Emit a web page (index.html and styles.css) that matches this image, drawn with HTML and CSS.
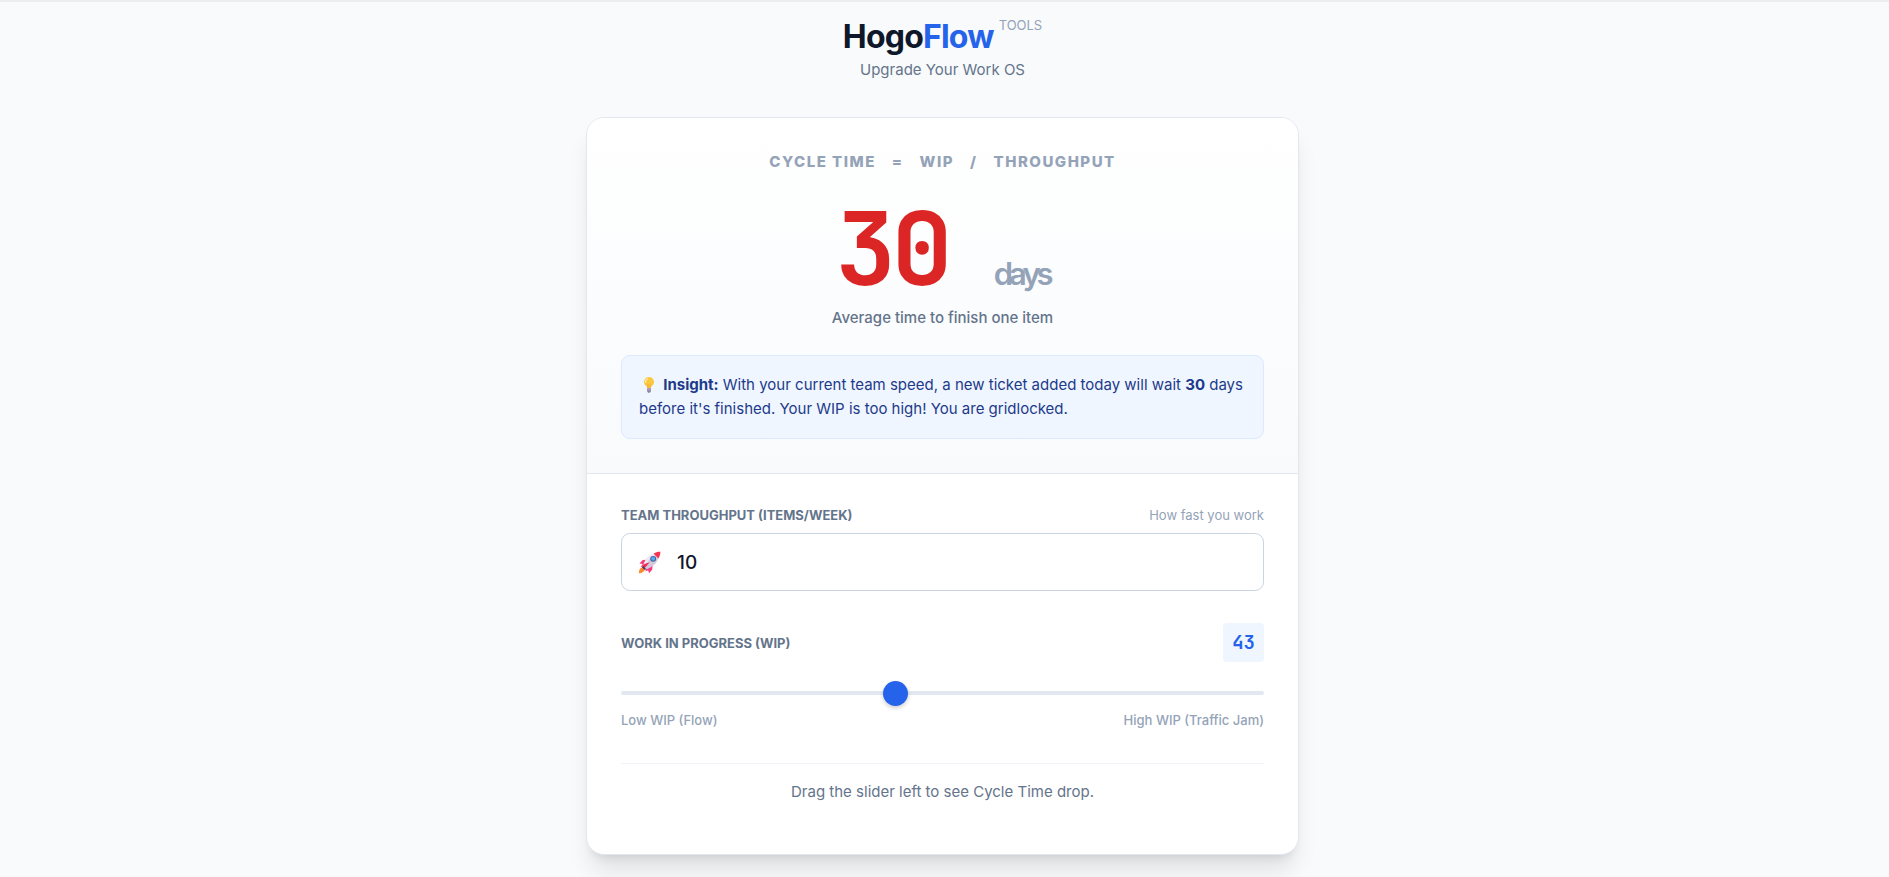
FILE: index.html
```
<!DOCTYPE html>
<html lang="en">
<head>
    <meta charset="UTF-8">
    <meta name="viewport" content="width=device-width, initial-scale=1.0">
    <title>HogoFlow Tools</title>
    <link rel="stylesheet" href="styles.css">
</head>
<body>
    <header class="header">
        <h1 class="logo">Hogo<span>Flow</span><sup>TOOLS</sup></h1>
        <p class="tagline">Upgrade Your Work OS</p>
    </header>

    <main class="card">
        <section class="result">
            <div class="formula">
                <span>Cycle Time</span><span>=</span><span>WIP</span><span>/</span><span>Throughput</span>
            </div>
            <div class="big-number">
                <span id="cycleTime">30</span>
                <span class="unit">days</span>
            </div>
            <p class="caption">Average time to finish one item</p>
            <div class="insight">
                <svg class="bulb" viewBox="0 0 20 20" aria-hidden="true">
                    <path d="M10 1a5.500 5.500 0 0 0-3.300 9.900c.9.7 1.100 1.500 1.300 2.600h4c.2-1.100.4-1.900 1.300-2.600A5.500 5.500 0 0 0 10 1z" fill="#fcc63f"/>
                    <path d="M8.500 3a4 4 0 0 0-2.300 4" stroke="#fff0a8" stroke-width="1.400" fill="none" stroke-linecap="round"/>
                    <path d="M8.800 13V9.500M11.200 13V9.500" stroke="#f29a2e" stroke-width=".8"/>
                    <path d="M7.800 13.500h4.400v3.200L11 18.500H9l-1.200-1.800z" fill="#8d83a3"/>
                    <path d="M8 15.300h4" stroke="#c9c2d8" stroke-width=".8"/>
                </svg>
                <strong>Insight:</strong> With your current team speed, a new ticket added today will wait <strong id="waitDays">30</strong> days before it's finished. <span id="verdict">Your WIP is too high! You are gridlocked.</span>
            </div>
        </section>

        <form class="controls">
            <div class="row">
                <label for="throughput">Team Throughput (items/week)</label>
                <span class="hint">How fast you work</span>
            </div>
            <div class="input-box">
                <svg class="rocket" viewBox="0 0 24 24" aria-hidden="true">
                    <path d="M1 23.200c-.3-3.400 1.300-5.700 4.400-6.400l2 2c-.8 2.800-3 4.300-6.400 4.400z" fill="#fb8b24"/>
                    <path d="M9.500 9 5 9.500 1.500 13l3.500.6-2.400 3.400 5.400-2.200zM15.300 15l-.6 4.500-3.200 3.800-.9-3.300-2.800 1.200 1.500-5.400z" fill="#f8377f"/>
                    <path d="M16.800 2.700C11.500 4.300 7.200 9 5.100 14.900l4.100 4.100c5.900-2.100 10.600-6.500 12.200-11.700z" fill="#d3c8de"/>
                    <path d="M16.800 2.700C12.300 4.200 8.500 7.900 6.300 12.500l2 2C10.800 9.500 14 6.100 18.300 4.200z" fill="#efe9f3"/>
                    <path d="M23.300.8c-2.600-.1-4.700.5-6.900 2l4.900 4.900C22.700 5.600 23.300 3.400 23.300.8z" fill="#f8314f"/>
                    <circle cx="15.800" cy="8.200" r="3.100" fill="#46628c"/>
                    <circle cx="15.800" cy="8.200" r="2.100" fill="#4fa8f7"/>
                    <path d="m12 12-5.800 6.800-2-1.300c.6-3 3.200-4.800 7.800-5.500z" fill="#ee2b4e"/>
                    <path d="m5.400 15.600 3.200 3.200-1.500 1-2.900-2.900z" fill="#473a68"/>
                </svg>
                <input type="text" inputmode="numeric" id="throughput" value="10">
            </div>

            <div class="row wip-row">
                <label for="wip">Work In Progress (WIP)</label>
                <output class="badge" id="wipValue" for="wip">43</output>
            </div>
            <input type="range" class="slider" id="wip" min="1" max="100" value="43">
            <div class="row scale">
                <span>Low WIP (Flow)</span>
                <span>High WIP (Traffic Jam)</span>
            </div>

            <p class="footnote">Drag the slider left to see Cycle Time drop.</p>
        </form>
    </main>
</body>
</html>
```
FILE: styles.css
```
* {
    box-sizing: border-box;
}
body {
    margin: 0;
    min-height: 100vh;
    padding: 14px 20px 20px 16px;
    border-top: 2px solid #eceef1;
    background: #f8fafc;
    color: #0f172a;
    font-family: Inter, sans-serif;
    font-size: 15px;
    line-height: 24px;
}
p {
    margin: 0;
}
.header {
    margin-bottom: 34px;
    text-align: center;
}
.logo {
    margin: 0;
    font-size: 32px;
    line-height: 41px;
    font-weight: 700;
    letter-spacing: -0.025em;
}
.logo span {
    color: #2563eb;
}
.logo sup {
    margin-left: 5px;
    color: #94a3b8;
    font-size: 13px;
    line-height: 13px;
    font-weight: 400;
    letter-spacing: 0;
    vertical-align: 18px;
}
.tagline {
    color: #64748b;
    line-height: 26px;
}
.card {
    max-width: 713px;
    margin: 0 auto;
    overflow: hidden;
    background: #fff;
    border: 1px solid #e2e8f0;
    border-radius: 18px;
    box-shadow: 0 20px 25px -5px rgba(0, 0, 0, 0.1), 0 8px 10px -6px rgba(0, 0, 0, 0.1);
}
.result {
    padding: 32px 34px 34px;
    background: linear-gradient(to bottom, #fff, #f8fafc);
    border-bottom: 1px solid #e2e8f0;
    text-align: center;
}
.formula {
    display: flex;
    justify-content: center;
    gap: 16px;
    color: #94a3b8;
    font-weight: 800;
    letter-spacing: 0.1em;
    text-transform: uppercase;
}
.big-number {
    display: flex;
    justify-content: center;
    align-items: baseline;
    gap: 46px;
    margin-top: 24px;
    color: #dc2626;
    font-family: "JetBrains Mono", "DejaVu Sans Mono", monospace;
    font-size: 102px;
    line-height: 102px;
    font-weight: 700;
    letter-spacing: -5px;
}
.unit {
    color: #94a3b8;
    font-family: Inter, sans-serif;
    font-size: 31px;
    line-height: 36px;
    font-weight: 600;
    letter-spacing: -4px;
}
.caption {
    margin-top: 6px;
    color: #64748b;
    font-weight: 500;
}
.insight {
    margin-top: 25px;
    padding: 17px;
    background: #eff6ff;
    border: 1px solid #dbeafe;
    border-radius: 9px;
    color: #1e3a8a;
    text-align: left;
}
.insight strong {
    font-weight: 700;
}
.bulb {
    width: 20px;
    height: 18px;
    vertical-align: -4px;
}
.controls {
    padding: 32px 34px 50px;
}
.row {
    display: flex;
    justify-content: space-between;
    align-items: center;
    line-height: 18px;
    font-size: 13px;
}
.row label {
    color: #64748b;
    font-weight: 700;
    text-transform: uppercase;
}
.hint {
    color: #94a3b8;
}
.input-box {
    display: flex;
    align-items: center;
    margin-top: 9px;
    padding-left: 16px;
    border: 1px solid #cbd5e1;
    border-radius: 9px;
}
.input-box:focus-within {
    border-color: #2563eb;
}
.rocket {
    flex: none;
    width: 23px;
    height: 23px;
}
.input-box input {
    flex: 1;
    min-width: 0;
    height: 56px;
    padding: 0 16px;
    border: none;
    outline: none;
    background: transparent;
    color: #0f172a;
    font-family: inherit;
    font-size: 19px;
    font-weight: 500;
}
.wip-row {
    margin-top: 32px;
}
.badge {
    padding: 0 9px;
    background: #eff6ff;
    border-radius: 4px;
    color: #2563eb;
    font-family: "JetBrains Mono", "DejaVu Sans Mono", monospace;
    font-size: 19px;
    line-height: 39px;
    font-weight: 700;
}
.slider {
    -webkit-appearance: none;
    appearance: none;
    display: block;
    width: 100%;
    height: 25px;
    margin: 18px 0 0;
    background: transparent;
    cursor: pointer;
}
.slider::-webkit-slider-runnable-track {
    height: 4px;
    background: #e2e8f0;
    border-radius: 2px;
}
.slider::-webkit-slider-thumb {
    -webkit-appearance: none;
    width: 25px;
    height: 25px;
    margin-top: -10px;
    background: #2563eb;
    border-radius: 50%;
    box-shadow: 0 2px 4px rgba(0, 0, 0, 0.2);
}
.scale {
    margin-top: 6px;
    color: #94a3b8;
    font-weight: 500;
}
.footnote {
    margin-top: 34px;
    padding-top: 16px;
    border-top: 1px solid #f1f5f9;
    color: #64748b;
    text-align: center;
}
```
